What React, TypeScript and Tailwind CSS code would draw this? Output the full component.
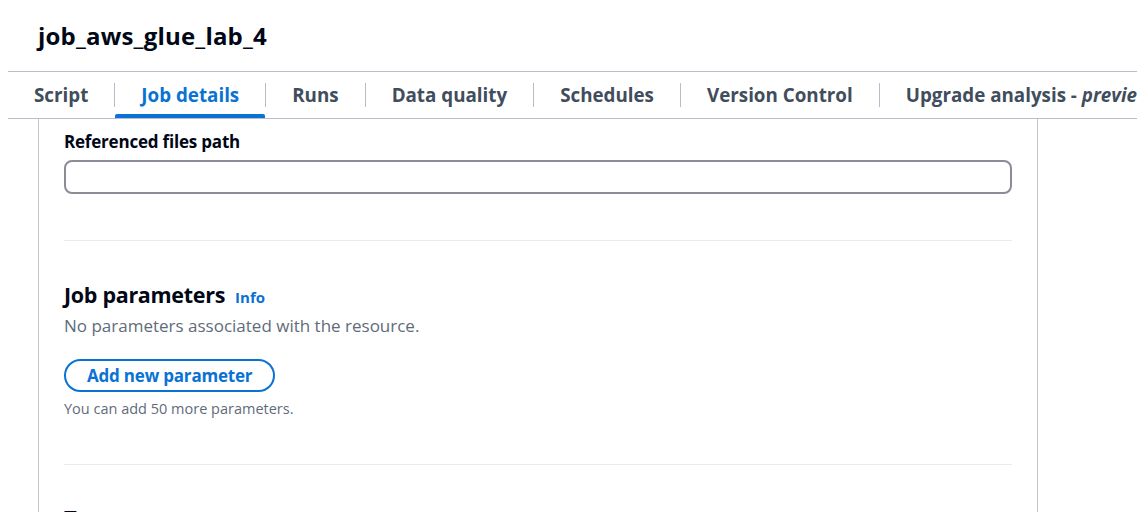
import React, { useState } from 'react';

type TabKey = 'script' | 'details' | 'runs' | 'quality' | 'schedules' | 'version' | 'upgrade';

const TABS: { key: TabKey; label: string; suffix?: string }[] = [
  { key: 'script', label: 'Script' },
  { key: 'details', label: 'Job details' },
  { key: 'runs', label: 'Runs' },
  { key: 'quality', label: 'Data quality' },
  { key: 'schedules', label: 'Schedules' },
  { key: 'version', label: 'Version Control' },
  { key: 'upgrade', label: 'Upgrade analysis - ', suffix: 'preview' },
];

export default function App() {
  const [active, setActive] = useState<TabKey>('details');

  return (
    <div
      className="w-full h-[512px] overflow-hidden bg-white text-[#000716]"
      style={{ fontFamily: '"Open Sans", "Noto Sans", Arial, sans-serif' }}
    >
      {/* Tiêu đề job */}
      <div className="h-[71px] flex items-center pl-[38px]">
        <h1 className="text-[24px] font-bold tracking-[0.2px] leading-none">job_aws_glue_lab_4</h1>
      </div>

      {/* Thanh tab */}
      <nav className="ml-[8px] h-[48px] border-y border-[#b6bec9] flex items-stretch whitespace-nowrap">
        {TABS.map((t, i) => {
          const isActive = active === t.key;
          return (
            <React.Fragment key={t.key}>
              {i > 0 && <div className="w-px h-[24px] self-center bg-[#b6bec9] shrink-0" />}
              <button
                onClick={() => setActive(t.key)}
                className={`relative shrink-0 px-[26px] text-[18.8px] font-bold ${
                  isActive ? 'text-[#0972d3]' : 'text-[#414d5c]'
                }`}
              >
                {t.label}
                {t.suffix && <i>{t.suffix}</i>}
                {isActive && (
                  <span className="absolute left-0 right-0 bottom-0 h-[4px] rounded-t-[2px] bg-[#0972d3]" />
                )}
              </button>
            </React.Fragment>
          );
        })}
      </nav>

      {/* Nội dung */}
      <div className="ml-[38px] w-[1000px] border-x border-[#c6c6cd] px-[25px] pt-[12px] h-[393px] overflow-hidden">
        <label className="block text-[17px] font-bold leading-[22px] tracking-[-0.2px]">Referenced files path</label>
        <input
          type="text"
          className="mt-[7px] w-full h-[34px] rounded-[8px] border-2 border-[#8c8c94] px-3 outline-none"
        />

        <div className="mt-[46px] border-t border-[#e9ebed]" />

        <div className="pt-[40px]">
          <div className="flex items-baseline gap-[10px]">
            <h2 className="text-[21.5px] font-bold leading-[28px] tracking-[-0.3px]">Job parameters</h2>
            <a className="text-[15px] font-bold text-[#0972d3]">Info</a>
          </div>
          <p className="mt-[6px] text-[17px] leading-[22px] text-[#5f6b7a]">
            No parameters associated with the resource.
          </p>
          <button className="mt-[22px] h-[33px] px-[21px] rounded-full border-2 border-[#0972d3] text-[17px] font-bold text-[#0972d3] tracking-[-0.2px]">
            Add new parameter
          </button>
          <p className="mt-[8px] text-[14.5px] leading-[18px] text-[#5f6b7a]">You can add 50 more parameters.</p>
        </div>

        <div className="mt-[46px] border-t border-[#e9ebed]" />

        <h2 className="mt-[38px] text-[22px] font-bold leading-[28px]">Tags</h2>
      </div>
    </div>
  );
}
